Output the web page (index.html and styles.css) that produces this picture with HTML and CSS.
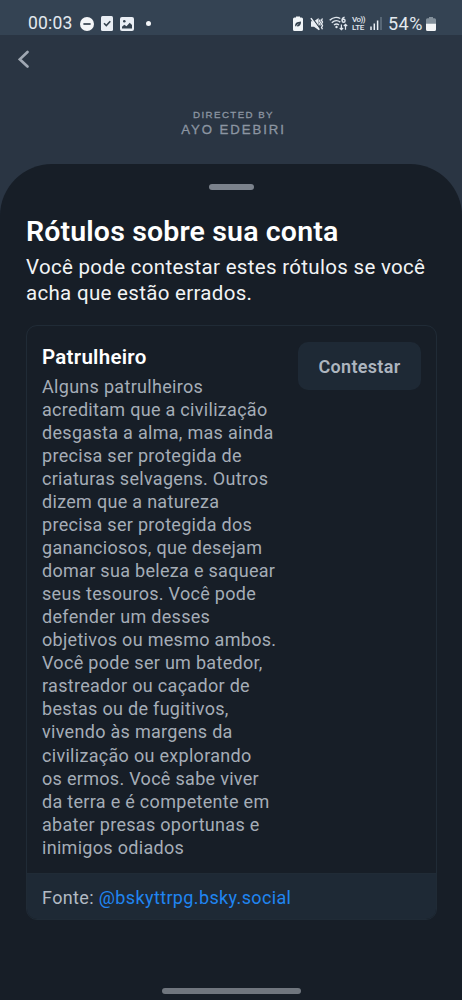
FILE: index.html
```html
<!DOCTYPE html>
<html lang="pt-BR">
<head>
<meta charset="utf-8">
<title>Rótulos sobre sua conta</title>
<link rel="stylesheet" href="styles.css">
</head>
<body>
<div class="screen">
  <header class="status">
    <div class="status-left">
      <span class="clock">00:03</span>
      <svg class="ic-dnd" width="14" height="14" viewBox="0 0 14 14"><circle cx="7" cy="7" r="7" fill="#f4f6f8"/><path d="M3.4 7h7.2" stroke="#34424f" stroke-width="1.7"/></svg>
      <svg class="ic-task" width="12" height="15" viewBox="0 0 12 15"><rect width="12" height="15" rx="1.5" fill="#e9eef4"/><path d="M3 7.2l2.300 2.300 4-4.300" fill="none" stroke="#34424f" stroke-width="1.600"/></svg>
      <svg class="ic-photo" width="14" height="14" viewBox="0 0 14 14"><rect width="14" height="14" rx="2" fill="#e9eef4"/><circle cx="4.300" cy="4.200" r="1.300" fill="#34424f"/><path d="M2 11.600V9.700l2.300-2 2.200 1.500 3.200-3.400L12 8v3.600z" fill="#34424f"/></svg>
      <i class="dot"></i>
    </div>
    <div class="status-right">
      <svg class="ic-eco" width="10" height="15" viewBox="0 0 10 15"><path d="M3 1.500V.5h4v1h1.500A1.500 1.500 0 0 1 10 3v10.500A1.500 1.500 0 0 1 8.500 15h-7A1.500 1.500 0 0 1 0 13.500V3a1.500 1.500 0 0 1 1.500-1.500z" fill="#f1f5f8"/><path d="M2.300 10.800C1.500 7 4 5.700 8 5.500 8.200 9.300 6 11.300 3.300 10" fill="#34424f"/><path d="M2.300 11l3.200-3.300" stroke="#dfe5ea" stroke-width=".7"/></svg>
      <svg class="ic-mute" width="14" height="14" viewBox="0 0 14 14"><path d="M1 4.300h3L8.600 1v12L4 9.700H1z" fill="#e9eef4"/><path d="M2 .6l8.400 11.600" stroke="#34424f" stroke-width="1.300"/><path d="M.9 1.100l8.400 11.600" stroke="#e9eef4" stroke-width="1.500"/><path d="M10.200 2.500l-.7 1.500.9 1.500-.9 1.500.9 1.500M12.500 1.500l-1 1.800 1 1.800-1 1.800 1 1.800-1 1.800 1 1.800" fill="none" stroke="#e9eef4" stroke-width="1.300"/></svg>
      <svg class="ic-wifi" width="19" height="15" viewBox="0 0 19 15"><g fill="none" stroke="#dfe6ed" stroke-width="1.400"><path d="M.7 4.200C3.600 1.300 8 .7 11.300 2.500M2.800 6.700c2.500-2.300 6-2.500 8.500-.6M5 9c1.500-1.300 3.500-1.300 5 0"/><path d="M15.600 1.200c-1.700.2-2.500 1.700-2.500 3.200"/><circle cx="14.600" cy="4.800" r="1.500"/><path d="M12.400 8.500v5M10.700 12l1.700 1.700 1.700-1.700M16.500 13.800V8.300M14.800 10l1.700-1.700 1.700 1.700" stroke-width="1.200"/></g><circle cx="7.500" cy="11" r="1.200" fill="#dfe6ed"/></svg>
      <span class="volte"><span class="vo">Vo))</span><span>LTE</span></span>
      <svg class="ic-signal" width="12" height="13" viewBox="0 0 12 13"><path d="M1 9.500V13M4.300 6.500V13M7.600 3.500V13" stroke="#e9eef4" stroke-width="1.500"/><path d="M11 0v13" stroke="#71808e" stroke-width="1.200"/></svg>
      <span class="percent">54%</span>
      <svg class="ic-batt" width="10" height="14" viewBox="0 0 10 14"><path d="M3 1.300V0h4v1.300h1.500A1.500 1.500 0 0 1 10 2.800V7H0V2.800a1.500 1.500 0 0 1 1.500-1.500z" fill="#83909b"/><path d="M0 6.800h10v5.700A1.500 1.500 0 0 1 8.500 14h-7A1.500 1.500 0 0 1 0 12.500z" fill="#f4f6f8"/></svg>
    </div>
  </header>
  <section class="banner">
    <svg class="back" width="12" height="18" viewBox="0 0 12 18"><path d="M9.500 2L1.800 9.300l7.700 7.200" fill="none" stroke="#a0a8b3" stroke-width="2.600" stroke-linecap="round" stroke-linejoin="miter"/></svg>
    <div class="credit"><div class="credit-top">DIRECTED BY</div><div class="credit-name">AYO EDEBIRI</div></div>
  </section>
  <main class="sheet">
    <div class="handle"></div>
    <h1>Rótulos sobre sua conta</h1>
    <p class="intro">Você pode contestar estes rótulos se você<br>acha que estão errados.</p>
    <article class="card">
      <div class="card-body">
        <div class="label-text">
          <h2>Patrulheiro</h2>
          <p class="desc">Alguns patrulheiros<br>acreditam que a civilização<br>desgasta a alma, mas ainda<br>precisa ser protegida de<br>criaturas selvagens. Outros<br>dizem que a natureza<br>precisa ser protegida dos<br>gananciosos, que desejam<br>domar sua beleza e saquear<br>seus tesouros. Você pode<br>defender um desses<br>objetivos ou mesmo ambos.<br>Você pode ser um batedor,<br>rastreador ou caçador de<br>bestas ou de fugitivos,<br>vivendo às margens da<br>civilização ou explorando<br>os ermos. Você sabe viver<br>da terra e é competente em<br>abater presas oportunas e<br>inimigos odiados</p>
        </div>
        <button class="appeal">Contestar</button>
      </div>
      <footer class="source">Fonte: <a class="handle-link">@bskyttrpg.bsky.social</a></footer>
    </article>
    <div class="home-bar"></div>
  </main>
</div>
</body>
</html>
```
FILE: styles.css
```css
* { box-sizing: border-box; }
body, h1, h2, p { margin: 0; }
body { background: #2a3543; font-family: Roboto, sans-serif; }
svg { display: block; flex: none; }
.screen { width: 462px; height: 1000px; display: flex; flex-direction: column; overflow: hidden; }
.status { height: 35px; flex: none; background: #344353; padding: 13px 26px 0 28px; display: flex; justify-content: space-between; color: #e3e9ef; }
.status-left, .status-right { display: flex; align-items: center; height: 21px; white-space: nowrap; }
.clock { width: 52px; font-size: 17.5px; line-height: 21px; letter-spacing: .2px; }
.ic-task { margin-left: 7px; }
.ic-photo { margin-left: 7px; }
.dot { width: 5px; height: 5px; border-radius: 50%; background: #f4f6f8; margin-left: 12px; }
.ic-mute { margin-left: 7px; }
.ic-wifi { margin-left: 5px; }
.volte { width: 14px; margin-left: 4px; font-size: 8px; line-height: 7.5px; font-weight: 500; letter-spacing: -.2px; display: flex; flex-direction: column; }
.vo { letter-spacing: -.5px; }
.ic-signal { margin-left: 4px; }
.percent { width: 36px; margin-left: 6px; font-size: 18px; line-height: 21px; letter-spacing: .5px; }
.ic-batt { margin-left: 2px; }
.banner { height: 129px; flex: none; padding: 15px 18px 0; display: flex; flex-direction: column; }
.credit { padding-top: 41px; margin-left: 5px; text-align: center; font-family: "Liberation Sans", Arial, sans-serif; color: #8c95a2; white-space: nowrap; -webkit-text-stroke: .3px #8c95a2; }
.credit-top { font-size: 9.7px; line-height: 12px; letter-spacing: 1.45px; }
.credit-name { font-size: 13.2px; line-height: 16px; letter-spacing: 1.95px; margin-top: 1px; }
.sheet { flex: 1; background: #171e27; border-radius: 52px 52px 0 0; padding: 20px 25px 0 26px; display: flex; flex-direction: column; }
.handle { width: 45px; height: 6px; border-radius: 3px; background: #7b828c; align-self: center; flex: none; }
h1 { margin-top: 25px; font-size: 28.5px; line-height: 34px; font-weight: 600; color: #fff; white-space: nowrap; letter-spacing: .15px; }
.intro { margin-top: 5px; font-size: 20.5px; line-height: 26px; color: #f1f3f5; white-space: nowrap; letter-spacing: .31px; }
.card { margin-top: 19px; height: 595px; flex: none; border: 1px solid #202b36; border-radius: 11px; overflow: hidden; display: flex; flex-direction: column; }
.card-body { flex: 1; padding: 16px 15px 0; display: flex; justify-content: space-between; align-items: flex-start; }
h2 { padding-top: 1px; font-size: 20.5px; line-height: 28px; font-weight: 600; color: #fff; letter-spacing: .27px; }
.desc { margin-top: 4px; font-size: 18px; line-height: 23.030px; color: #a5adb7; white-space: nowrap; letter-spacing: .3px; }
.appeal { width: 123px; height: 48px; flex: none; border: 0; border-radius: 10px; padding: 1px 0 0; background: #1e2935; color: #adb5bf; font: 600 18px/23px Roboto, sans-serif; letter-spacing: .32px; }
.source { height: 46px; flex: none; padding: 12px 15px 0; background: #1e2935; border-top: 1px solid #202b36; color: #b2bac4; font-size: 18px; line-height: 24px; letter-spacing: .37px; white-space: nowrap; }
.handle-link { color: #2085f1; }
.home-bar { width: 139px; height: 6px; border-radius: 3px; background: #70767e; align-self: center; margin-top: 68px; flex: none; }
```
